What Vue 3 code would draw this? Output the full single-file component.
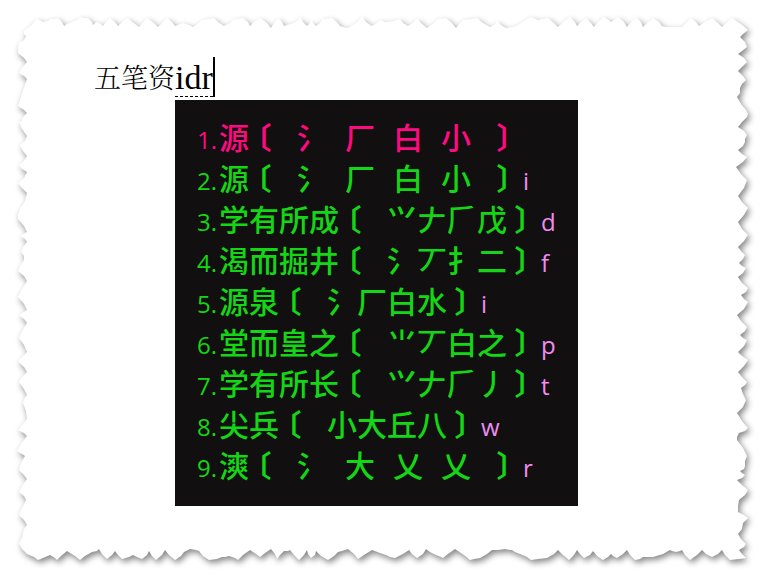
<script setup>
const candidates = [
  { text: '源', parts: ['氵', '厂', '白', '小'], spaced: true, key: '' },
  { text: '源', parts: ['氵', '厂', '白', '小'], spaced: true, key: 'i' },
  { text: '学有所成', parts: ['⺍', '𠂇', '𠂆', '戊'], key: 'd' },
  { text: '渴而掘井', parts: ['氵', '丆', '扌', '二'], key: 'f' },
  { text: '源泉', parts: ['氵', '厂', '白', '水'], key: 'i' },
  { text: '堂而皇之', parts: ['⺌', '丆', '白', '之'], key: 'p' },
  { text: '学有所长', parts: ['⺍', '𠂇', '𠂆', '丿'], key: 't' },
  { text: '尖兵', parts: ['小', '大', '丘', '八'], key: 'w' },
  { text: '漺', parts: ['氵', '大', '乂', '乂'], spaced: true, key: 'r' },
]

// Torn paper outline, clockwise from the top left corner.
const top = [
  [37, 18], [43, 22], [51, 19], [58, 18], [64, 26], [72, 22], [80, 17], [88, 18], [93, 25], [97, 22], [103, 26],
  [110, 18], [118, 26], [127, 18], [139, 27], [147, 18], [158, 27], [167, 18], [175, 26], [183, 23], [193, 27],
  [202, 20], [214, 18], [224, 26], [233, 20], [243, 18], [250, 26], [260, 18], [271, 28], [278, 18], [284, 26],
  [291, 24], [300, 17], [307, 26], [311, 20], [316, 26], [322, 19], [332, 18], [340, 26], [348, 28], [362, 17],
  [372, 26], [380, 20], [386, 22], [400, 19], [408, 26], [417, 18], [427, 28], [436, 20], [446, 18], [456, 28],
  [463, 20], [477, 18], [490, 27], [497, 21], [506, 28], [518, 25], [531, 17], [538, 20], [548, 18], [558, 27],
  [570, 17], [577, 26], [586, 18], [594, 27], [604, 17], [611, 22], [618, 17], [627, 27], [636, 17], [643, 27],
  [653, 18], [662, 26], [671, 27], [682, 27], [691, 18], [699, 26], [712, 18], [722, 27], [732, 18],
]
const right = [
  [748, 30], [740, 37], [747, 47], [738, 54], [747, 62], [738, 71], [746, 80], [740, 88], [737, 97], [746, 110],
  [747, 117], [738, 127], [747, 135], [745, 142], [738, 150], [747, 157], [736, 167], [747, 180], [738, 196],
  [748, 208], [738, 222], [748, 235], [738, 247], [745, 255], [739, 263], [746, 268], [738, 277], [748, 288],
  [741, 295], [748, 302], [737, 315], [747, 327], [740, 335], [747, 340], [738, 352], [748, 360], [738, 372],
  [747, 382], [741, 388], [746, 400], [737, 413], [748, 428], [739, 433], [737, 440], [747, 456], [745, 466],
  [740, 471], [745, 475], [737, 480], [748, 490], [739, 500], [738, 512], [748, 518], [743, 523], [738, 534],
  [746, 544], [739, 550], [746, 558],
]
const bottom = [
  [730, 560], [722, 550], [712, 557], [702, 550], [690, 560], [682, 550], [676, 552], [670, 550], [653, 557],
  [643, 557], [635, 560], [627, 550], [617, 558], [611, 554], [603, 560], [593, 551], [584, 558], [577, 550],
  [569, 560], [558, 550], [547, 558], [531, 560], [520, 554], [512, 550], [505, 549], [492, 550], [480, 558],
  [470, 560], [455, 549], [443, 558], [436, 555], [426, 549], [417, 558], [409, 550], [395, 558], [386, 555],
  [372, 550], [358, 559], [348, 549], [338, 552], [328, 560], [316, 551], [311, 558], [307, 550], [299, 560],
  [290, 550], [284, 551], [277, 559], [271, 549], [260, 557], [250, 550], [238, 560], [229, 556], [222, 557],
  [209, 560], [199, 551], [190, 549], [184, 552], [175, 560], [165, 550], [156, 560], [149, 551], [142, 559],
  [133, 555], [122, 559], [115, 551], [107, 559], [99, 549], [92, 552], [80, 560], [67, 551], [57, 560],
  [50, 555], [38, 560], [27, 554],
]
const left = [
  [19, 543], [23, 533], [27, 525], [19, 515], [26, 500], [19, 492], [27, 479], [19, 470], [25, 456], [17, 451],
  [27, 436], [18, 430], [27, 419], [23, 403], [27, 395], [19, 382], [27, 372], [18, 361], [27, 352], [19, 338],
  [27, 323], [19, 315], [27, 310], [18, 297], [27, 281], [18, 271], [24, 260], [21, 252], [27, 242], [20, 236],
  [27, 232], [18, 219], [20, 209], [27, 193], [18, 183], [27, 172], [19, 165], [27, 156], [20, 145], [27, 136],
  [19, 122], [22, 119], [27, 113], [18, 106], [27, 79], [19, 73], [27, 62], [18, 53], [19, 43], [26, 36], [24, 31],
]

const outline = [...top, ...right, ...bottom, ...left]

// Breaks every edge into small steps so that the paper fibre looks ragged.
const paperPath = outline
  .map(([x, y], i) => {
    const [nx, ny] = outline[(i + 1) % outline.length]
    const wobble = i % 2 ? 1 : -1
    const mx = Math.round((x + nx) / 2) + wobble
    const my = Math.round((y + ny) / 2)
    return `${i ? 'L' : 'M'}${x} ${y}L${mx} ${my}`
  })
  .join('') + 'Z'
</script>

<template>
  <main class="page">
    <svg class="paper" viewBox="0 0 765 577" preserveAspectRatio="none" aria-hidden="true">
      <path :d="paperPath" />
    </svg>
    <div class="editor">
      <span class="committed">五笔资</span>
      <div class="ime">
        <div class="line"><span class="composing">idr</span><span class="caret"></span></div>
        <ol class="candidates">
          <li v-for="(c, i) in candidates" :key="i">
            <button type="button" class="candidate" :class="{ active: i === 0 }">
              <span class="number">{{ i + 1 }}.</span>
              <span>{{ c.text }}</span>
              <span class="bracket">〔</span>
              <span class="parts" :class="{ spaced: c.spaced }">
                <span v-for="(p, j) in c.parts" :key="j">{{ p }}</span>
              </span>
              <span class="bracket">〕</span>
              <span class="key">{{ c.key }}</span>
            </button>
          </li>
        </ol>
      </div>
    </div>
  </main>
</template>

<style>
body {
  margin: 0;
  background: #fff;
}
</style>

<style scoped>
.page {
  position: relative;
  box-sizing: border-box;
  min-height: 100vh;
  padding: 57px 24px 70px 94px;
}

.paper {
  position: absolute;
  inset: 0;
  width: 100%;
  height: 100%;
}

.paper path {
  fill: #fff;
  filter: drop-shadow(2px 3px 3px rgba(0, 0, 0, 0.48));
}

.editor {
  position: relative;
  display: flex;
  align-items: flex-start;
  color: #000;
}

.committed {
  font: 300 27px/40px "Noto Serif CJK SC", "Noto Sans CJK SC", serif;
  white-space: nowrap;
}

.line {
  display: flex;
  align-items: flex-start;
  height: 40px;
}

.composing {
  box-sizing: border-box;
  height: 40px;
  border-bottom: 1px dashed #000;
  font: 34px/42px "Liberation Serif", serif;
}

.caret {
  width: 2px;
  height: 40px;
  background: #000;
}

.candidates {
  box-sizing: border-box;
  margin: 3px 0 0;
  padding: 16px 22px 21px;
  list-style: none;
  background: #110f10;
}

.candidate {
  display: flex;
  align-items: baseline;
  width: 100%;
  height: 41px;
  padding: 0;
  border: 0;
  background: none;
  color: #15d615;
  font: 500 30px/41px "Noto Sans CJK SC", sans-serif;
  text-align: left;
  white-space: nowrap;
  cursor: pointer;
}

.candidate.active {
  color: #ff0a80;
}

.number,
.key {
  font-family: "Open Sans", "Noto Sans", sans-serif;
  font-size: 24px;
  font-weight: 400;
}

.number {
  width: 22px;
}

.bracket {
  width: 30px;
  font-weight: 700;
  font-feature-settings: "halt";
  text-align: center;
}

.key {
  min-width: 14px;
  margin-left: 4px;
  color: #f08cf0;
}

.parts {
  display: flex;
  margin-left: 18px;
}

.parts.spaced {
  gap: 18px;
  margin-right: 18px;
}
</style>
